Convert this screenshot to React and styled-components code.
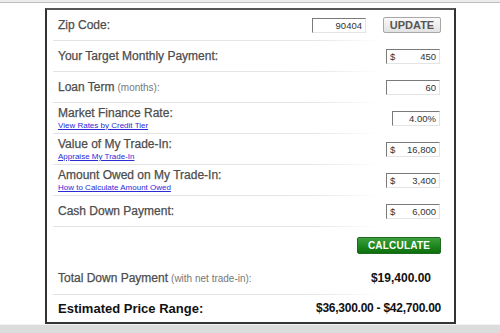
import React from "react";
import styled, { createGlobalStyle } from "styled-components";

const GlobalStyle = createGlobalStyle`
  html, body {
    margin: 0;
    padding: 0;
    background: #fff;
    font-family: "Liberation Sans", Arial, sans-serif;
  }
`;

const rows = [
  { label: "Your Target Monthly Payment:", value: "450", dollar: true },
  { label: "Loan Term", note: "(months)", value: "60" },
  { label: "Market Finance Rate:", link: "View Rates by Credit Tier", value: "4.00%", narrow: true },
  { label: "Value of My Trade-In:", link: "Appraise My Trade-In", value: "16,800", dollar: true },
  { label: "Amount Owed on My Trade-In:", link: "How to Calculate Amount Owed", value: "3,400", dollar: true },
  { label: "Cash Down Payment:", value: "6,000", dollar: true }
];

const App = () => {
  return (
    <Page>
      <GlobalStyle />
      <TopBar />
      <Panel>
        <Row>
          <Label>Zip Code:</Label>
          <Controls>
            <Field width={54}>
              <span />
              <span>90404</span>
            </Field>
            <UpdateButton>UPDATE</UpdateButton>
          </Controls>
        </Row>
        {rows.map(r => (
          <Row key={r.label}>
            <LabelBlock>
              <Label>
                {r.label}
                {r.note ? <Note>{r.note}:</Note> : null}
              </Label>
              {r.link ? <SmallLink href="#">{r.link}</SmallLink> : null}
            </LabelBlock>
            <Field width={r.narrow ? 48 : 54}>
              <span>{r.dollar ? "$" : ""}</span>
              <span>{r.value}</span>
            </Field>
          </Row>
        ))}
        <ButtonArea>
          <CalculateButton>CALCULATE</CalculateButton>
        </ButtonArea>
        <Row tall>
          <Label>
            Total Down Payment<Note>(with net trade-in):</Note>
          </Label>
          <Total>$19,400.00</Total>
        </Row>
        <Row last>
          <BigLabel>Estimated Price Range:</BigLabel>
          <Range>$36,300.00 - $42,700.00</Range>
        </Row>
      </Panel>
      <BottomBar />
    </Page>
  );
};

export default App;

const Page = styled.div`
  width: 500px;
  height: 333px;
  display: flex;
  flex-direction: column;
  overflow: hidden;
`;

const TopBar = styled.div`
  height: 2px;
  background: #ececec;
  border-bottom: 1px solid #bdbdbd;
`;

const Panel = styled.div`
  margin: 5px 0 0 45px;
  width: 388px;
  height: 312px;
  border: 2px solid #333;
  border-top-color: #555;
  padding: 0 13px 0 6px;
  box-sizing: content-box;
  display: flex;
  flex-direction: column;
`;

const Row = styled.div`
  position: relative;
  display: flex;
  align-items: center;
  justify-content: space-between;
  height: ${props => (props.tall ? "32px" : props.last ? "26px" : "30px")};
  padding-left: 5px;
  flex-shrink: 0;
  ${props =>
    props.last
      ? ""
      : `
  &::after {
    content: "";
    position: absolute;
    left: 0;
    bottom: -1px;
    width: 326px;
    height: 1px;
    background: linear-gradient(to right, #e2e2e2 0%, #e6e6e6 80%, #fff 100%);
  }
  margin-bottom: 1px;`}
`;

const LabelBlock = styled.div`
  display: flex;
  flex-direction: column;
`;

const Label = styled.div`
  font-size: 12px;
  color: #4d4d4d;
  line-height: 14px;
  -webkit-text-stroke: 0.25px #4d4d4d;
`;

const Note = styled.span`
  font-size: 10px;
  color: #777;
  margin-left: 3px;
  -webkit-text-stroke: 0;
`;

const SmallLink = styled.a`
  font-size: 8px;
  color: #2b2bd6;
  text-decoration: underline;
  line-height: 11px;
`;

const Controls = styled.div`
  display: flex;
  align-items: center;
  gap: 16px;
`;

const Field = styled.div`
  width: ${props => props.width}px;
  height: 15px;
  box-sizing: border-box;
  display: flex;
  align-items: center;
  justify-content: space-between;
  padding: 0 3px 0 3px;
  border-top: 1px solid #7a7a7a;
  border-left: 1px solid #7a7a7a;
  border-right: 1px solid #e4e4e4;
  border-bottom: 1px solid #e4e4e4;
  font-size: 9.5px;
  color: #333;
  background: #fff;
  margin-right: 1px;
`;

const UpdateButton = styled.div`
  width: 58px;
  height: 16px;
  box-sizing: border-box;
  display: flex;
  align-items: center;
  justify-content: center;
  border: 1px solid #a8a8a8;
  border-radius: 2px;
  background: linear-gradient(#fafafa, #e2e2e2);
  font-size: 11px;
  font-weight: bold;
  color: #555;
`;

const ButtonArea = styled.div`
  display: flex;
  justify-content: flex-end;
  padding: 10px 0 8px;
  flex-shrink: 0;
`;

const CalculateButton = styled.div`
  width: 84px;
  height: 17px;
  box-sizing: border-box;
  display: flex;
  align-items: center;
  justify-content: center;
  border: 1px solid #1d6b1d;
  border-radius: 2px;
  background: linear-gradient(#3f9e3f 0%, #1f8a1f 50%, #0d6e0d 100%);
  font-size: 10px;
  font-weight: bold;
  color: #fff;
  letter-spacing: 0.2px;
`;

const Total = styled.div`
  font-size: 12px;
  font-weight: bold;
  color: #111;
  margin-right: 10px;
`;

const BigLabel = styled.div`
  font-size: 13px;
  font-weight: bold;
  color: #111;
`;

const Range = styled.div`
  font-size: 12px;
  font-weight: bold;
  color: #111;
  letter-spacing: -0.25px;
`;

const BottomBar = styled.div`
  margin-top: auto;
  height: 8px;
  background: #dcdcdc;
  border-top: 1px solid #f2f2f2;
`;
